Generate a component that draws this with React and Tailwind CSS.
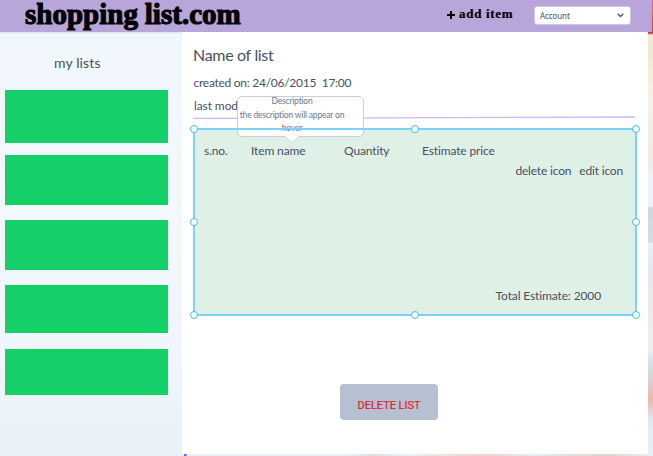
const lists = [
  "mt-[90px] h-[53px]",
  "mt-[12px] h-[50px]",
  "mt-[15px] h-[50px]",
  "mt-[15px] h-[48px]",
  "mt-[16px] h-[46px]",
];

const handles = [
  "left-[-5px] top-[-5px]",
  "left-[216px] top-[-5px]",
  "right-[-5px] top-[-5px]",
  "left-[-5px] top-[88px]",
  "right-[-5px] top-[88px]",
  "left-[-5px] bottom-[-5px]",
  "left-[216px] bottom-[-5px]",
  "right-[-5px] bottom-[-5px]",
];

function Header() {
  return (
    <header className="flex h-8 w-[652px] items-start bg-[#b8a6da] font-['Liberation_Serif',serif] font-bold text-black">
      <h1 className="mt-[-1px] ml-[25px] w-[422px] whitespace-nowrap text-[29px] leading-[30px] tracking-[0.02px] [word-spacing:-0.5px] [-webkit-text-stroke:1.1px_black]">
        shopping list.com
      </h1>
      <button className="flex h-[29px] w-[87px] items-center whitespace-nowrap text-[13px] tracking-[0.7px]">
        <svg width="8" height="8" viewBox="0 0 8 8" className="mt-px mr-1 shrink-0">
          <path d="M4 0v8M0 4h8" stroke="#000" strokeWidth="2" />
        </svg>
        <span className="mt-[-2px] [-webkit-text-stroke:0.2px_black]">add item</span>
      </button>
      <button className="mt-1.5 flex h-[19px] w-[97px] items-center justify-between rounded-[3px] border border-[#c9cbdc] bg-white pr-1.5 pl-[5px] font-['Open_Sans',sans-serif] text-[8px] font-normal text-[#46505d]">
        <span className="mt-px font-['Noto_Sans',sans-serif] tracking-[-0.1px]">Account</span>
        <svg width="7" height="5" viewBox="0 0 7 5" fill="none">
          <path d="M.7.8 3.5 3.6 6.3.8" stroke="#4b5b6c" strokeWidth="1.4" />
        </svg>
      </button>
    </header>
  );
}

function Tooltip() {
  return (
    <div className="absolute top-[64px] left-[55px] h-[41px] w-[127px] rounded-[5px] border border-[#c3cede] bg-white/95 text-center text-[8.5px] tracking-[-0.18px] text-[#68778e]">
      <div className="mt-[-2px] w-[108px] whitespace-nowrap leading-[13.5px]">
        <p>Description</p>
        <p>the description will appear on</p>
        <p>hover</p>
      </div>
      <svg width="14" height="8" viewBox="0 0 14 8" className="absolute top-[39px] left-[47px]">
        <path d="M0 0 7 7 14 0z" fill="#fff" />
        <path d="M0 .5 7 7 14 .5" fill="none" stroke="#c3cede" strokeWidth="0.7" />
      </svg>
    </div>
  );
}

export default function App() {
  return (
    <div className="relative h-[456px] w-[653px] overflow-hidden bg-[linear-gradient(to_bottom,#dc6b80_0px,#d9473f_29px,#b0403f_33px,#f4ead9_35px,#eee7d4_50px,#f3edda_75px,#f5f2ec_100px,#f1e8e2_155px,#edf2f7_180px,#edf2f7_206px,#ced6df_208px,#d4dbe2_242px,#e8f0fa_243px,#e4e8f0_270px,#ece8ea_300px,#eee_350px,#d3e6ef_359px,#d6d9d5_373px,#e9b8b1_400px,#dfe9f2_420px,#e8f1f5_456px)] font-['Lato',sans-serif] text-[#47515f]">
      <Header />
      <div className="flex">
        <aside className="h-[424px] w-[182px] bg-[linear-gradient(to_bottom,#d9e2f5_0px,#f0f7fb_2px,#f3f8fd_180px,#eff5fa_330px,#e8f1f8_424px)]">
          <h2 className="ml-[54px] h-0 whitespace-nowrap pt-[21px] text-[14px] leading-5 tracking-[0.12px]">my lists</h2>
          <div className="mt-[-53px] ml-[5px] w-[163px]">
            {lists.map((size, i) => (
              <div key={i} className={`${size} bg-[#15d068]`} />
            ))}
          </div>
        </aside>
        <main className="relative h-[422px] w-[466px] bg-white pt-[12px] pl-[11px]">
          <h2 className="text-[16px] leading-[22px] tracking-[-0.32px]">Name of list</h2>
          <p className="mt-[7px] ml-[0.5px] whitespace-pre text-[12px] leading-5 tracking-[-0.27px]">created on: 24/06/2015  17:00</p>
          <p className="mt-[3px] ml-[1px] text-[12px] leading-5 tracking-[-0.1px]">last mod</p>
          <svg width="443" height="3" viewBox="0 0 443 3" className="block">
            <path d="M0 2.5 442 1" stroke="#c9b9f1" strokeWidth="1.3" />
          </svg>
          <section className="mt-[9px] h-[188px] w-[444px] border-2 border-[#7bd3f8] bg-[#dff0e6] text-[12px] leading-5 tracking-[-0.13px]">
            <div className="flex pt-[11px] pl-[9px]">
              <span className="w-[47px]">s.no.</span>
              <span className="w-[93px]">Item name</span>
              <span className="w-[78px]">Quantity</span>
              <span>Estimate price</span>
            </div>
            <div className="flex justify-end gap-2 pr-[12px] tracking-[-0.18px]">
              <span>delete icon</span>
              <span>edit icon</span>
            </div>
            <p className="mt-[105px] pr-[34px] text-right">Total Estimate: 2000</p>
          </section>
          <button className="mt-[68px] ml-[147px] block h-[36px] w-[98px] rounded-[4px] bg-[#b5c1d0] pt-[8px] font-['Roboto',sans-serif] text-[11px] tracking-[-0.02px] text-[#e31b2d] [-webkit-text-stroke:0.2px_#e31b2d]">
            DELETE LIST
          </button>
          <Tooltip />
          <div className="pointer-events-none absolute top-[96px] left-[11px] h-[188px] w-[444px] border-2 border-[#7bd3f8]">
            {handles.map((place) => (
              <i key={place} className={`absolute size-2 rounded-full border-[1.5px] border-[#3dbcf5] bg-white ${place}`} />
            ))}
          </div>
        </main>
      </div>
      <div className="ml-[184px] mt-[-2px] h-[2px] w-[469px] bg-[linear-gradient(to_right,#775ce0_2px,#eaf0f7_3px,#eaf0f7_160px,#dddedf_190px,#e8f1f5_220px,#efd2cb_300px,#e4edf1_350px,#ddd4ce_420px,#e8f1f5_469px)]" />
    </div>
  );
}
